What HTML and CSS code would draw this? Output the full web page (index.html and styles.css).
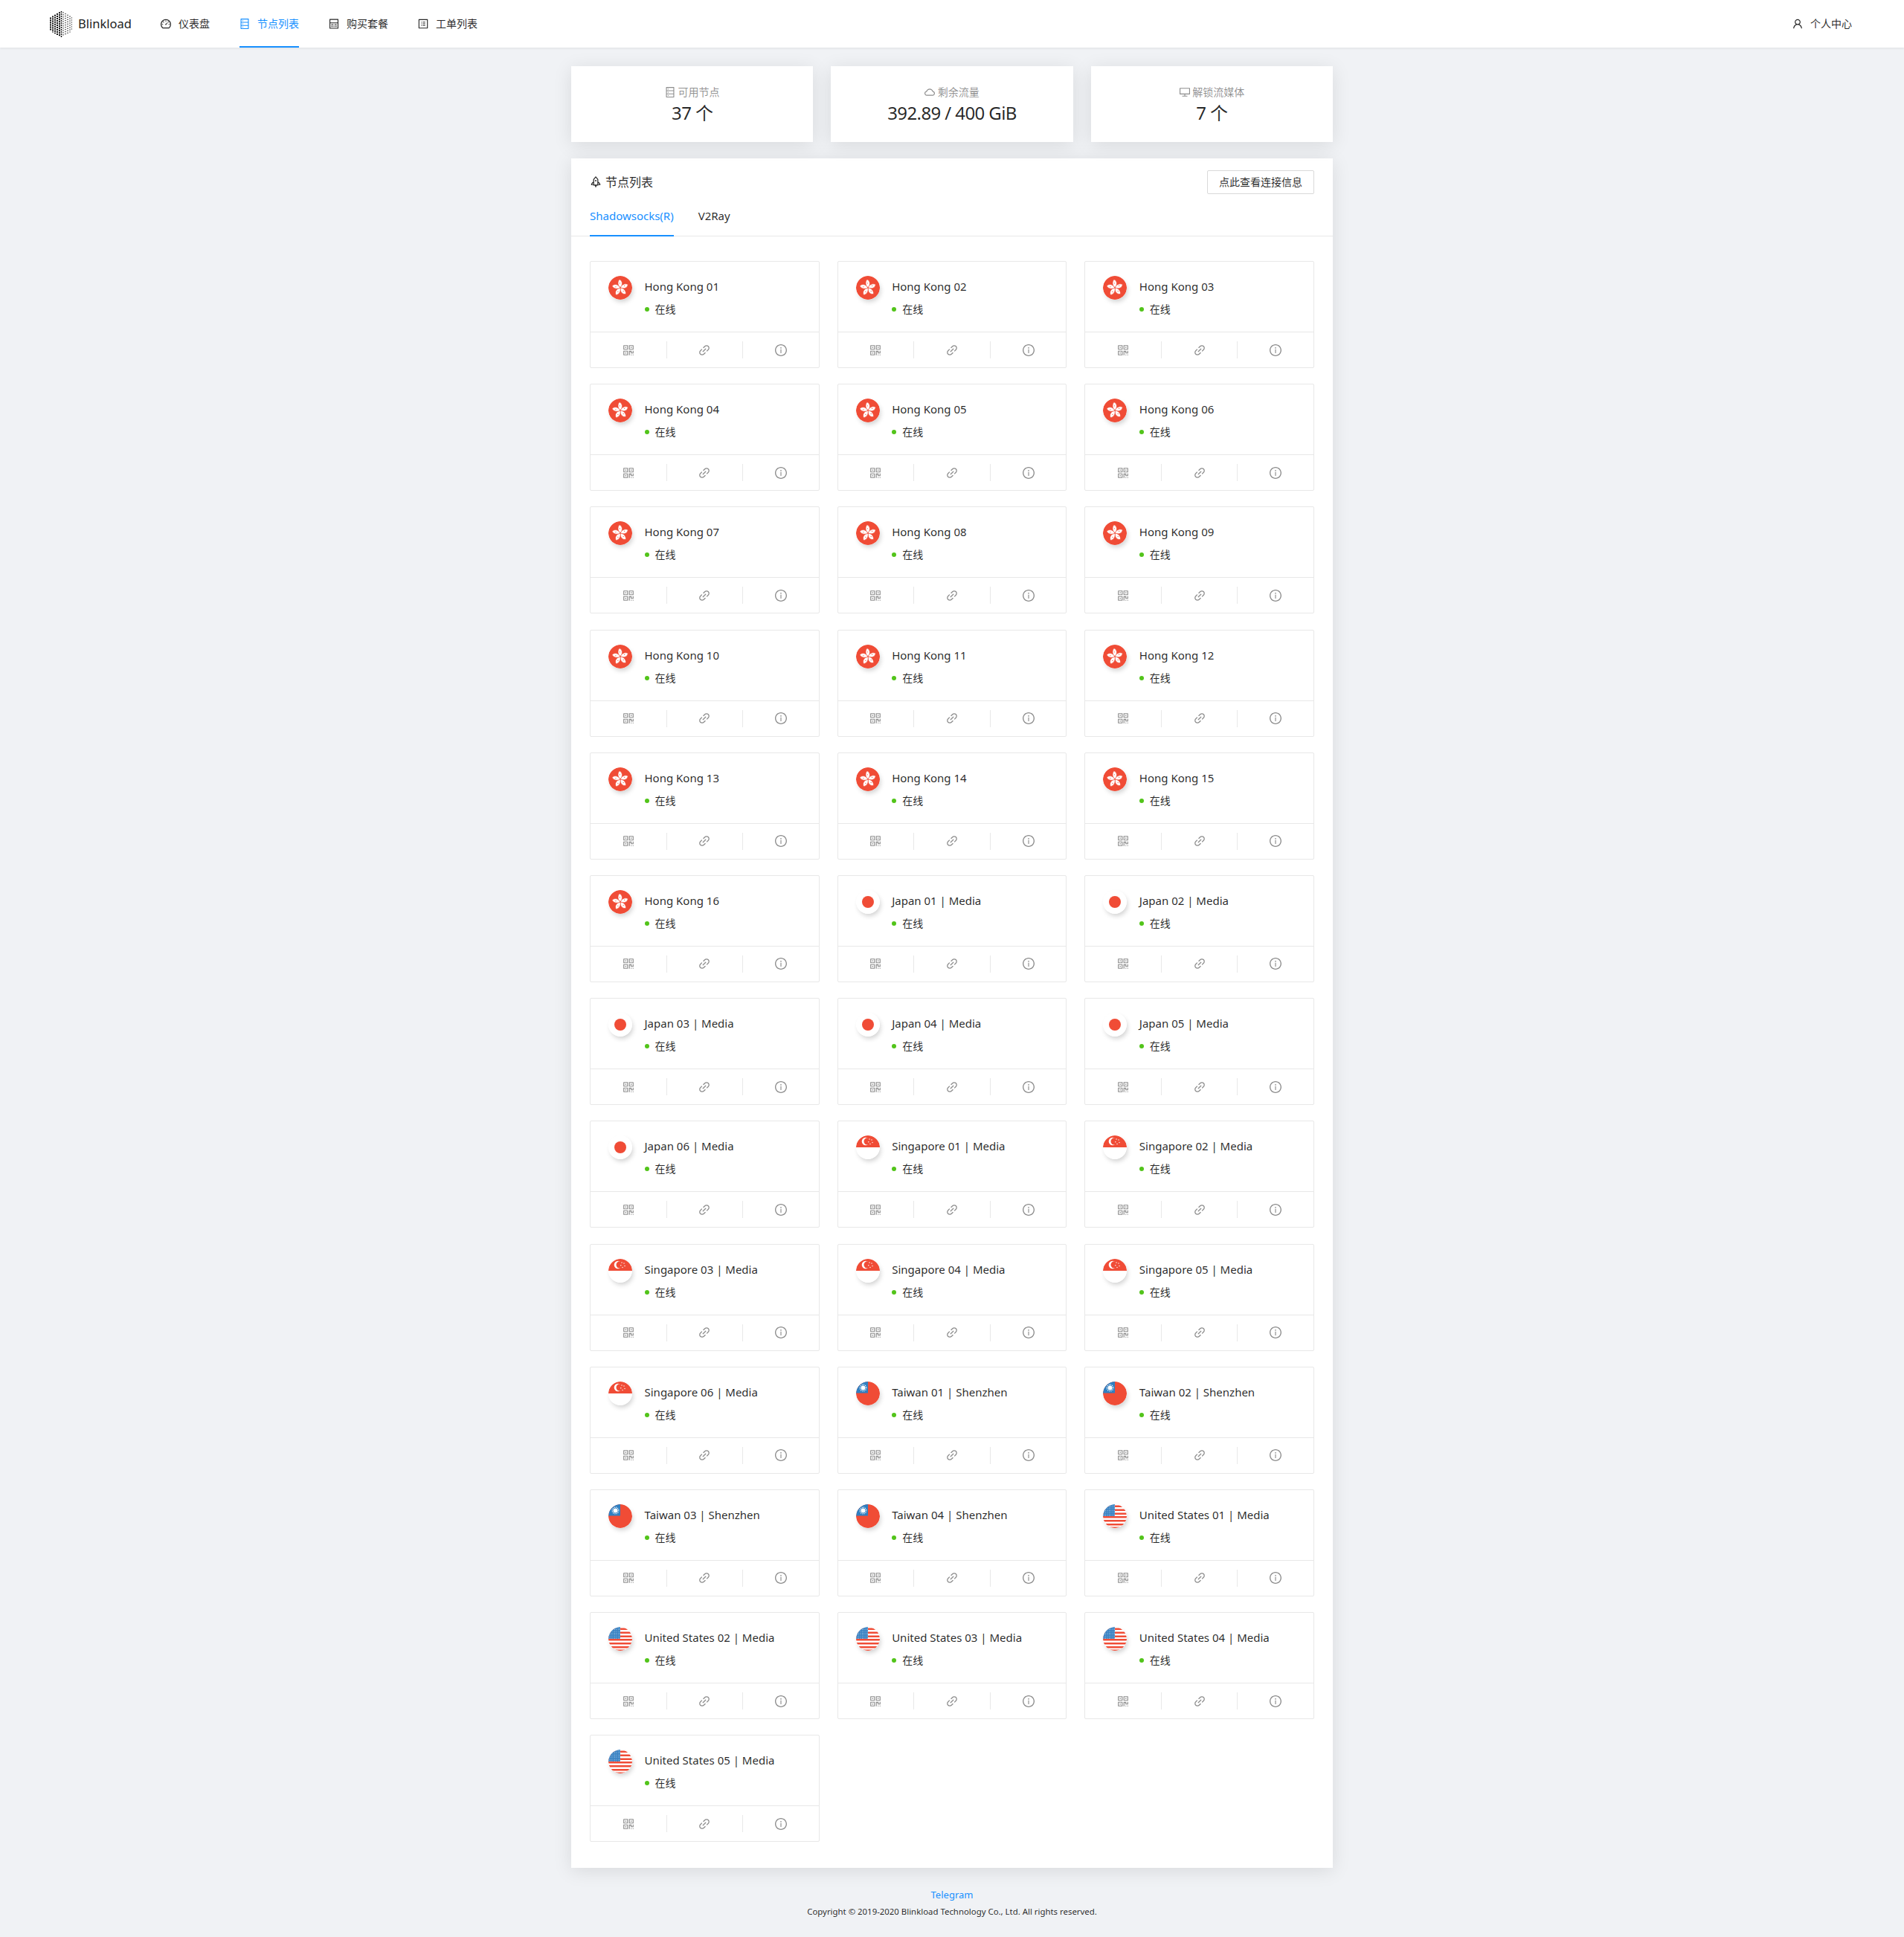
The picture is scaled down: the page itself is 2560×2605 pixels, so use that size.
FILE: index.html
```html
<!DOCTYPE html>
<html lang="zh-CN">
<head>
  <meta charset="UTF-8" />
  <title>Blinkload</title>
  <link rel="stylesheet" href="styles.css">
</head>
<body>
  <svg class="icon-defs" aria-hidden="true">
    <defs>
      <clipPath id="round"><circle cx="16" cy="16" r="16"/></clipPath>
      <pattern id="stars" width="2.4" height="2.4" patternUnits="userSpaceOnUse"><circle cx="1.2" cy="1.2" r=".42" fill="#fff"/></pattern>
    </defs>
    <symbol id="i-dashboard" viewBox="64 64 896 896"><path d="M924.8 385.6a446.7 446.7 0 0 0-96-142.4 446.7 446.7 0 0 0-142.4-96C631.1 123.8 572.5 112 512 112s-119.1 11.8-174.4 35.2a446.7 446.7 0 0 0-142.4 96 446.7 446.7 0 0 0-96 142.4C75.8 440.9 64 499.5 64 560c0 132.7 58.3 257.7 159.9 343.1l1.7 1.4c5.8 4.8 13.1 7.5 20.6 7.5h531.7c7.5 0 14.8-2.7 20.6-7.5l1.7-1.4C901.7 817.7 960 692.7 960 560c0-60.5-11.9-119.1-35.2-174.4zM761.4 836H262.6A371.12 371.12 0 0 1 140 560c0-99.4 38.7-192.8 109-263 70.3-70.3 163.7-109 263-109 99.4 0 192.8 38.7 263 109 70.3 70.3 109 163.7 109 263 0 105.6-44.5 205.5-122.6 276z"/><path d="M623.5 421.5a8.03 8.03 0 0 0-11.3 0L527.7 506c-18.7-5-39.4-.2-54.1 14.5a55.95 55.95 0 0 0 0 79.2 55.95 55.95 0 0 0 79.2 0 55.87 55.87 0 0 0 14.5-54.1l84.5-84.5c3.1-3.1 3.1-8.2 0-11.3l-28.3-28.3zM490 320h44c4.4 0 8-3.6 8-8v-80c0-4.4-3.6-8-8-8h-44c-4.4 0-8 3.6-8 8v80c0 4.4 3.6 8 8 8zm260 218v44c0 4.4 3.6 8 8 8h80c4.4 0 8-3.6 8-8v-44c0-4.4-3.6-8-8-8h-80c-4.4 0-8 3.6-8 8zm12.7-197.2l-31.1-31.1a8.03 8.03 0 0 0-11.3 0l-56.6 56.6a8.03 8.03 0 0 0 0 11.3l31.1 31.1c3.1 3.1 8.2 3.1 11.3 0l56.6-56.6c3.1-3.1 3.1-8.2 0-11.3zm-458.6-31.1a8.03 8.03 0 0 0-11.3 0l-31.1 31.1a8.03 8.03 0 0 0 0 11.3l56.6 56.6c3.1 3.1 8.2 3.1 11.3 0l31.1-31.1c3.1-3.1 3.1-8.2 0-11.3l-56.6-56.6zM262 530h-80c-4.4 0-8 3.6-8 8v44c0 4.4 3.6 8 8 8h80c4.4 0 8-3.6 8-8v-44c0-4.4-3.6-8-8-8z"/></symbol>
    <symbol id="i-database" viewBox="64 64 896 896"><path d="M832 64H192c-17.7 0-32 14.3-32 32v832c0 17.7 14.3 32 32 32h640c17.7 0 32-14.3 32-32V96c0-17.7-14.3-32-32-32zm-600 72h560v208H232V136zm560 480H232V408h560v208zm0 272H232V680h560v208zM304 240a40 40 0 1 0 80 0 40 40 0 1 0-80 0zm0 272a40 40 0 1 0 80 0 40 40 0 1 0-80 0zm0 272a40 40 0 1 0 80 0 40 40 0 1 0-80 0z"/></symbol>
    <symbol id="i-shop" viewBox="64 64 896 896"><path fill-rule="evenodd" d="M160 96h704a32 32 0 0 1 32 32v768a32 32 0 0 1-32 32H160a32 32 0 0 1-32-32V128a32 32 0 0 1 32-32zm40 72v232h624V168zm0 296v392h624V464zm80 80h190v64H280zm280 0h184v64H560zM280 664h64v112h-64zm124 0h66v112h-66zm156 0h64v112h-64zm120 0h64v112h-64z"/></symbol>
    <symbol id="i-profile" viewBox="64 64 896 896"><path d="M880 112H144c-17.7 0-32 14.3-32 32v736c0 17.7 14.3 32 32 32h736c17.7 0 32-14.3 32-32V144c0-17.7-14.3-32-32-32zm-40 728H184V184h656v656zM492 400h184c4.4 0 8-3.6 8-8v-48c0-4.4-3.6-8-8-8H492c-4.4 0-8 3.6-8 8v48c0 4.4 3.6 8 8 8zm0 144h184c4.4 0 8-3.6 8-8v-48c0-4.4-3.6-8-8-8H492c-4.4 0-8 3.6-8 8v48c0 4.4 3.6 8 8 8zm0 144h184c4.4 0 8-3.6 8-8v-48c0-4.4-3.6-8-8-8H492c-4.4 0-8 3.6-8 8v48c0 4.4 3.6 8 8 8zM340 368a40 40 0 1 0 80 0 40 40 0 1 0-80 0zm0 144a40 40 0 1 0 80 0 40 40 0 1 0-80 0zm0 144a40 40 0 1 0 80 0 40 40 0 1 0-80 0z"/></symbol>
    <symbol id="i-user" viewBox="64 64 896 896"><path d="M858.5 763.6a374 374 0 0 0-80.6-119.5 375.63 375.63 0 0 0-119.5-80.6c-.4-.2-.8-.3-1.2-.5C719.5 518 760 444.7 760 362c0-137-111-248-248-248S264 225 264 362c0 82.7 40.5 156 102.8 201.1-.4.2-.8.3-1.2.5-44.8 18.9-85 46-119.5 80.6a375.63 375.63 0 0 0-80.6 119.5A371.7 371.7 0 0 0 136 901.8a8 8 0 0 0 8 8.2h60c4.4 0 7.9-3.5 8-7.8 2-77.2 33-149.5 87.8-204.3 56.7-56.7 132-87.9 212.2-87.9s155.5 31.2 212.2 87.9C779 752.7 810 825 812 902.2c.1 4.4 3.6 7.8 8 7.8h60a8 8 0 0 0 8-8.2c-1-47.8-10.9-94.3-29.5-138.2zM512 534c-45.9 0-89.1-17.9-121.6-50.4S340 407.9 340 362c0-45.9 17.9-89.1 50.4-121.6S466.1 190 512 190s89.1 17.9 121.6 50.4S684 316.1 684 362c0 45.9-17.9 89.1-50.4 121.6S557.9 534 512 534z"/></symbol>
    <symbol id="i-cloud" viewBox="64 64 896 896"><path d="M811.4 418.7C765.6 297.9 648.9 212 512.2 212S258.8 297.8 213 418.6C127.3 441.1 64 519.1 64 612c0 110.5 89.5 200 199.9 200h496.2C870.5 812 960 722.5 960 612c0-92.7-63.1-170.7-148.6-193.3zm36.3 281a123.07 123.07 0 0 1-87.6 36.3H263.9c-33.1 0-64.2-12.9-87.6-36.3A123.3 123.3 0 0 1 140 612c0-28 9.1-54.3 26.2-76.3a125.7 125.7 0 0 1 66.1-43.7l37.9-9.9 13.9-36.6c8.6-22.8 20.6-44.1 35.7-63.4a245.6 245.6 0 0 1 52.4-49.9c41.1-28.9 89.5-44.2 140-44.2s98.9 15.3 140 44.2c19.9 14 37.5 30.8 52.4 49.9 15.1 19.3 27.1 40.7 35.7 63.4l13.8 36.5 37.8 10c54.3 14.5 92.1 63.8 92.1 120 0 33.1-12.9 64.3-36.3 87.7z"/></symbol>
    <symbol id="i-desktop" viewBox="64 64 896 896"><path d="M928 140H96c-17.7 0-32 14.3-32 32v496c0 17.7 14.3 32 32 32h380v112H304c-8.8 0-16 7.2-16 16v48c0 4.4 3.6 8 8 8h432c4.4 0 8-3.6 8-8v-48c0-8.8-7.2-16-16-16H548V700h380c17.7 0 32-14.3 32-32V172c0-17.7-14.3-32-32-32zm-40 488H136V212h752v416z"/></symbol>
    <symbol id="i-rocket" viewBox="64 64 896 896"><path fill-rule="evenodd" d="M512 84c9 0 18 4 24.5 11.4l152.4 180.700c9.8 11.500 15.100 26.100 15.100 41.200v165.800c94.600 44.900 160 141.300 160 252.900H704v32H592c-8 30-30 52-48 62v66c0 10-8 12-14 6l-18-16-18 16c-6 6-14 4-14-6v-66c-18-10-40-32-48-62H320v-32H160c0-111.600 65.400-208 160-252.900V317.300c0-15.100 5.300-29.700 15.100-41.200L487.500 95.400C493.900 87.800 503 84 512 84zm0 84L392 310c-2 2.500-2 5-2 8v376h244V318c0-3 0-5.500-2-8zM320 566c-45 30-76 76-86 122h86zm384 0v122h86c-10-46-41-92-86-122zM512 344a56 56 0 1 1 0 112 56 56 0 0 1 0-112z"/></symbol>
    <symbol id="i-qrcode" viewBox="64 64 896 896"><path d="M468 128H160c-17.7 0-32 14.3-32 32v308c0 4.4 3.6 8 8 8h332c4.4 0 8-3.6 8-8V136c0-4.4-3.6-8-8-8zm-56 284H192V192h220v220zm-138-74h56c4.4 0 8-3.6 8-8v-56c0-4.4-3.6-8-8-8h-56c-4.4 0-8 3.6-8 8v56c0 4.4 3.6 8 8 8zm194 210H136c-4.4 0-8 3.6-8 8v308c0 17.7 14.3 32 32 32h308c4.4 0 8-3.6 8-8V556c0-4.4-3.6-8-8-8zm-56 284H192V612h220v220zm-138-74h56c4.4 0 8-3.6 8-8v-56c0-4.4-3.6-8-8-8h-56c-4.4 0-8 3.6-8 8v56c0 4.4 3.6 8 8 8zm590-630H556c-4.4 0-8 3.6-8 8v332c0 4.4 3.6 8 8 8h332c4.4 0 8-3.6 8-8V160c0-17.7-14.3-32-32-32zm-32 284H612V192h220v220zm-138-74h56c4.4 0 8-3.6 8-8v-56c0-4.4-3.6-8-8-8h-56c-4.4 0-8 3.6-8 8v56c0 4.4 3.6 8 8 8zm194 210h-48c-4.4 0-8 3.6-8 8v134h-78V556c0-4.4-3.6-8-8-8H556c-4.4 0-8 3.6-8 8v332c0 4.4 3.6 8 8 8h48c4.4 0 8-3.6 8-8V644h78v102c0 4.4 3.6 8 8 8h190c4.4 0 8-3.6 8-8V556c0-4.4-3.6-8-8-8zM746 832h-48c-4.4 0-8 3.6-8 8v48c0 4.4 3.6 8 8 8h48c4.4 0 8-3.6 8-8v-48c0-4.4-3.6-8-8-8zm142 0h-48c-4.4 0-8 3.6-8 8v48c0 4.4 3.6 8 8 8h48c4.4 0 8-3.6 8-8v-48c0-4.4-3.6-8-8-8z"/></symbol>
    <symbol id="i-link" viewBox="64 64 896 896"><path d="M574 665.4a8.03 8.03 0 0 0-11.3 0L446.5 781.6c-53.8 53.8-144.6 59.5-204 0-59.5-59.5-53.8-150.2 0-204l116.2-116.2c3.1-3.1 3.1-8.2 0-11.3l-39.8-39.8a8.03 8.03 0 0 0-11.3 0L191.4 526.5c-84.6 84.6-84.6 221.5 0 306s221.5 84.6 306 0l116.2-116.2c3.1-3.1 3.1-8.2 0-11.3L574 665.4zm258.6-474c-84.6-84.6-221.5-84.6-306 0L410.3 307.6a8.03 8.03 0 0 0 0 11.3l39.7 39.7c3.1 3.1 8.2 3.1 11.3 0l116.2-116.2c53.8-53.8 144.6-59.5 204 0 59.5 59.5 53.8 150.2 0 204L665.3 562.6a8.03 8.03 0 0 0 0 11.3l39.8 39.8c3.1 3.1 8.2 3.1 11.3 0l116.2-116.2c84.5-84.6 84.5-221.5 0-306.1zM610.1 372.3a8.03 8.03 0 0 0-11.3 0L372.3 598.7a8.03 8.03 0 0 0 0 11.3l39.6 39.6c3.1 3.1 8.2 3.1 11.3 0l226.4-226.4c3.1-3.1 3.1-8.2 0-11.3l-39.5-39.6z"/></symbol>
    <symbol id="i-info" viewBox="64 64 896 896"><path d="M512 64C264.6 64 64 264.6 64 512s200.6 448 448 448 448-200.6 448-448S759.4 64 512 64zm0 820c-205.4 0-372-166.6-372-372s166.6-372 372-372 372 166.6 372 372-166.6 372-372 372z"/><path d="M464 336a48 48 0 1 0 96 0 48 48 0 1 0-96 0zm72 112h-48c-4.4 0-8 3.6-8 8v272c0 4.4 3.6 8 8 8h48c4.4 0 8-3.6 8-8V456c0-4.4-3.6-8-8-8z"/></symbol>

    <symbol id="flag-hk" viewBox="0 0 32 32">
      <circle cx="16" cy="16" r="16" fill="#f04c36"/>
      <g id="hk-petal"><path d="M16 15.800C13 13.500 11.600 8.800 14.800 4.800c3.900 1.500 5.200 6.800 1.200 11z" fill="#fff" stroke="#f04c36" stroke-width=".6"/><circle cx="15.300" cy="9.800" r=".6" fill="#f04c36"/></g>
      <use href="#hk-petal" transform="rotate(72 16 16)"/>
      <use href="#hk-petal" transform="rotate(144 16 16)"/>
      <use href="#hk-petal" transform="rotate(216 16 16)"/>
      <use href="#hk-petal" transform="rotate(288 16 16)"/>
    </symbol>
    <symbol id="flag-jp" viewBox="0 0 32 32">
      <circle cx="16" cy="16" r="16" fill="#fff"/>
      <circle cx="16" cy="16" r="8" fill="#f04c36"/>
    </symbol>
    <symbol id="flag-sg" viewBox="0 0 32 32">
      <circle cx="16" cy="16" r="16" fill="#fff"/>
      <path d="M0 16a16 16 0 0 1 32 0z" fill="#f04c36"/>
      <circle cx="13" cy="8" r="5.300" fill="#fff"/>
      <circle cx="15.200" cy="8" r="4.700" fill="#f04c36"/>
      <g fill="#fff"><circle cx="18" cy="5" r=".7"/><circle cx="21" cy="6" r=".7"/><circle cx="22" cy="9.500" r=".7"/><circle cx="19" cy="11.500" r=".7"/><circle cx="16.800" cy="8.800" r=".7"/></g>
    </symbol>
    <symbol id="flag-tw" viewBox="0 0 32 32">
      <circle cx="16" cy="16" r="16" fill="#f04c36"/>
      <g clip-path="url(#round)"><rect width="16" height="15.500" fill="#2f7fc1"/></g>
      <circle cx="9.500" cy="8.500" r="3" fill="#fff"/>
      <circle cx="9.500" cy="8.500" r="4.300" fill="none" stroke="#fff" stroke-width="1.400" stroke-dasharray="1 1.250"/>
    </symbol>
    <symbol id="flag-us" viewBox="0 0 32 32">
      <g clip-path="url(#round)">
        <rect width="32" height="32" fill="#fff"/>
        <g fill="#f04c36"><rect y="1.500" width="32" height="2.500"/><rect y="6.500" width="32" height="2.500"/><rect y="11.500" width="32" height="2.500"/><rect y="16" width="32" height="2.500"/><rect y="21" width="32" height="2.500"/><rect y="26" width="32" height="2.500"/><rect y="30.500" width="32" height="2"/></g>
        <rect width="16" height="16" fill="#3a83c3"/>
        <rect width="16" height="16" fill="url(#stars)"/>
      </g>
    </symbol>
  </svg>

  <header class="topbar">
    <a class="logo" href="#">
      <svg class="logo-mark" viewBox="0 0 30 35" fill="none" stroke="#111" stroke-width="2" stroke-dasharray="2 1">
        <path d="M1 8.400V26.600"/><path d="M4 6.600V28.400"/><path d="M7 4.800V30.200"/><path d="M10 3V32"/><path d="M13 1.200V33.800"/><path d="M15.500 0V35" stroke-width="1.400"/>
        <path d="M18 1.200V33.800" stroke-width="1.200" stroke-dasharray="1.200 1.800"/><path d="M21 3V32" stroke-width="1.200" stroke-dasharray="1.200 1.800"/><path d="M24 4.800V30.200" stroke-width="1.200" stroke-dasharray="1.200 1.800"/><path d="M27 6.600V28.400" stroke-width="1.200" stroke-dasharray="1.200 1.800"/><path d="M29.500 8.400V26.600" stroke-width="1.200" stroke-dasharray="1.200 1.800"/>
      </svg>
      <span>Blinkload</span>
    </a>
    <nav class="nav">
      <a href="#"><svg class="icon"><use href="#i-dashboard"/></svg>仪表盘</a>
      <a href="#" class="active"><svg class="icon"><use href="#i-database"/></svg>节点列表</a>
      <a href="#"><svg class="icon"><use href="#i-shop"/></svg>购买套餐</a>
      <a href="#"><svg class="icon"><use href="#i-profile"/></svg>工单列表</a>
    </nav>
    <a class="user-link" href="#"><svg class="icon"><use href="#i-user"/></svg>个人中心</a>
  </header>

  <main class="container">
    <div class="stats">
      <div class="stat-card">
        <div class="stat-label"><svg class="icon"><use href="#i-database"/></svg> 可用节点</div>
        <div class="stat-value">37 个</div>
      </div>
      <div class="stat-card">
        <div class="stat-label"><svg class="icon"><use href="#i-cloud"/></svg> 剩余流量</div>
        <div class="stat-value">392.89 / 400 GiB</div>
      </div>
      <div class="stat-card">
        <div class="stat-label"><svg class="icon"><use href="#i-desktop"/></svg> 解锁流媒体</div>
        <div class="stat-value">7 个</div>
      </div>
    </div>

    <section class="panel">
      <div class="panel-head">
        <h2 class="panel-title"><svg class="icon"><use href="#i-rocket"/></svg>节点列表</h2>
        <button class="btn" type="button">点此查看连接信息</button>
      </div>
      <div class="tabs">
        <a href="#" class="tab active">Shadowsocks(R)</a>
        <a href="#" class="tab">V2Ray</a>
      </div>
      <div class="node-grid">
        <div class="node-card">
          <div class="node-info"><svg class="flag"><use href="#flag-hk"/></svg><div class="node-text"><h4>Hong Kong 01</h4><p class="status"><i></i>在线</p></div></div>
          <div class="node-actions"><span><svg class="icon"><use href="#i-qrcode"/></svg></span><span><svg class="icon"><use href="#i-link"/></svg></span><span><svg class="icon"><use href="#i-info"/></svg></span></div>
        </div>
        <div class="node-card">
          <div class="node-info"><svg class="flag"><use href="#flag-hk"/></svg><div class="node-text"><h4>Hong Kong 02</h4><p class="status"><i></i>在线</p></div></div>
          <div class="node-actions"><span><svg class="icon"><use href="#i-qrcode"/></svg></span><span><svg class="icon"><use href="#i-link"/></svg></span><span><svg class="icon"><use href="#i-info"/></svg></span></div>
        </div>
        <div class="node-card">
          <div class="node-info"><svg class="flag"><use href="#flag-hk"/></svg><div class="node-text"><h4>Hong Kong 03</h4><p class="status"><i></i>在线</p></div></div>
          <div class="node-actions"><span><svg class="icon"><use href="#i-qrcode"/></svg></span><span><svg class="icon"><use href="#i-link"/></svg></span><span><svg class="icon"><use href="#i-info"/></svg></span></div>
        </div>
        <div class="node-card">
          <div class="node-info"><svg class="flag"><use href="#flag-hk"/></svg><div class="node-text"><h4>Hong Kong 04</h4><p class="status"><i></i>在线</p></div></div>
          <div class="node-actions"><span><svg class="icon"><use href="#i-qrcode"/></svg></span><span><svg class="icon"><use href="#i-link"/></svg></span><span><svg class="icon"><use href="#i-info"/></svg></span></div>
        </div>
        <div class="node-card">
          <div class="node-info"><svg class="flag"><use href="#flag-hk"/></svg><div class="node-text"><h4>Hong Kong 05</h4><p class="status"><i></i>在线</p></div></div>
          <div class="node-actions"><span><svg class="icon"><use href="#i-qrcode"/></svg></span><span><svg class="icon"><use href="#i-link"/></svg></span><span><svg class="icon"><use href="#i-info"/></svg></span></div>
        </div>
        <div class="node-card">
          <div class="node-info"><svg class="flag"><use href="#flag-hk"/></svg><div class="node-text"><h4>Hong Kong 06</h4><p class="status"><i></i>在线</p></div></div>
          <div class="node-actions"><span><svg class="icon"><use href="#i-qrcode"/></svg></span><span><svg class="icon"><use href="#i-link"/></svg></span><span><svg class="icon"><use href="#i-info"/></svg></span></div>
        </div>
        <div class="node-card">
          <div class="node-info"><svg class="flag"><use href="#flag-hk"/></svg><div class="node-text"><h4>Hong Kong 07</h4><p class="status"><i></i>在线</p></div></div>
          <div class="node-actions"><span><svg class="icon"><use href="#i-qrcode"/></svg></span><span><svg class="icon"><use href="#i-link"/></svg></span><span><svg class="icon"><use href="#i-info"/></svg></span></div>
        </div>
        <div class="node-card">
          <div class="node-info"><svg class="flag"><use href="#flag-hk"/></svg><div class="node-text"><h4>Hong Kong 08</h4><p class="status"><i></i>在线</p></div></div>
          <div class="node-actions"><span><svg class="icon"><use href="#i-qrcode"/></svg></span><span><svg class="icon"><use href="#i-link"/></svg></span><span><svg class="icon"><use href="#i-info"/></svg></span></div>
        </div>
        <div class="node-card">
          <div class="node-info"><svg class="flag"><use href="#flag-hk"/></svg><div class="node-text"><h4>Hong Kong 09</h4><p class="status"><i></i>在线</p></div></div>
          <div class="node-actions"><span><svg class="icon"><use href="#i-qrcode"/></svg></span><span><svg class="icon"><use href="#i-link"/></svg></span><span><svg class="icon"><use href="#i-info"/></svg></span></div>
        </div>
        <div class="node-card">
          <div class="node-info"><svg class="flag"><use href="#flag-hk"/></svg><div class="node-text"><h4>Hong Kong 10</h4><p class="status"><i></i>在线</p></div></div>
          <div class="node-actions"><span><svg class="icon"><use href="#i-qrcode"/></svg></span><span><svg class="icon"><use href="#i-link"/></svg></span><span><svg class="icon"><use href="#i-info"/></svg></span></div>
        </div>
        <div class="node-card">
          <div class="node-info"><svg class="flag"><use href="#flag-hk"/></svg><div class="node-text"><h4>Hong Kong 11</h4><p class="status"><i></i>在线</p></div></div>
          <div class="node-actions"><span><svg class="icon"><use href="#i-qrcode"/></svg></span><span><svg class="icon"><use href="#i-link"/></svg></span><span><svg class="icon"><use href="#i-info"/></svg></span></div>
        </div>
        <div class="node-card">
          <div class="node-info"><svg class="flag"><use href="#flag-hk"/></svg><div class="node-text"><h4>Hong Kong 12</h4><p class="status"><i></i>在线</p></div></div>
          <div class="node-actions"><span><svg class="icon"><use href="#i-qrcode"/></svg></span><span><svg class="icon"><use href="#i-link"/></svg></span><span><svg class="icon"><use href="#i-info"/></svg></span></div>
        </div>
        <div class="node-card">
          <div class="node-info"><svg class="flag"><use href="#flag-hk"/></svg><div class="node-text"><h4>Hong Kong 13</h4><p class="status"><i></i>在线</p></div></div>
          <div class="node-actions"><span><svg class="icon"><use href="#i-qrcode"/></svg></span><span><svg class="icon"><use href="#i-link"/></svg></span><span><svg class="icon"><use href="#i-info"/></svg></span></div>
        </div>
        <div class="node-card">
          <div class="node-info"><svg class="flag"><use href="#flag-hk"/></svg><div class="node-text"><h4>Hong Kong 14</h4><p class="status"><i></i>在线</p></div></div>
          <div class="node-actions"><span><svg class="icon"><use href="#i-qrcode"/></svg></span><span><svg class="icon"><use href="#i-link"/></svg></span><span><svg class="icon"><use href="#i-info"/></svg></span></div>
        </div>
        <div class="node-card">
          <div class="node-info"><svg class="flag"><use href="#flag-hk"/></svg><div class="node-text"><h4>Hong Kong 15</h4><p class="status"><i></i>在线</p></div></div>
          <div class="node-actions"><span><svg class="icon"><use href="#i-qrcode"/></svg></span><span><svg class="icon"><use href="#i-link"/></svg></span><span><svg class="icon"><use href="#i-info"/></svg></span></div>
        </div>
        <div class="node-card">
          <div class="node-info"><svg class="flag"><use href="#flag-hk"/></svg><div class="node-text"><h4>Hong Kong 16</h4><p class="status"><i></i>在线</p></div></div>
          <div class="node-actions"><span><svg class="icon"><use href="#i-qrcode"/></svg></span><span><svg class="icon"><use href="#i-link"/></svg></span><span><svg class="icon"><use href="#i-info"/></svg></span></div>
        </div>
        <div class="node-card">
          <div class="node-info"><svg class="flag"><use href="#flag-jp"/></svg><div class="node-text"><h4>Japan 01 | Media</h4><p class="status"><i></i>在线</p></div></div>
          <div class="node-actions"><span><svg class="icon"><use href="#i-qrcode"/></svg></span><span><svg class="icon"><use href="#i-link"/></svg></span><span><svg class="icon"><use href="#i-info"/></svg></span></div>
        </div>
        <div class="node-card">
          <div class="node-info"><svg class="flag"><use href="#flag-jp"/></svg><div class="node-text"><h4>Japan 02 | Media</h4><p class="status"><i></i>在线</p></div></div>
          <div class="node-actions"><span><svg class="icon"><use href="#i-qrcode"/></svg></span><span><svg class="icon"><use href="#i-link"/></svg></span><span><svg class="icon"><use href="#i-info"/></svg></span></div>
        </div>
        <div class="node-card">
          <div class="node-info"><svg class="flag"><use href="#flag-jp"/></svg><div class="node-text"><h4>Japan 03 | Media</h4><p class="status"><i></i>在线</p></div></div>
          <div class="node-actions"><span><svg class="icon"><use href="#i-qrcode"/></svg></span><span><svg class="icon"><use href="#i-link"/></svg></span><span><svg class="icon"><use href="#i-info"/></svg></span></div>
        </div>
        <div class="node-card">
          <div class="node-info"><svg class="flag"><use href="#flag-jp"/></svg><div class="node-text"><h4>Japan 04 | Media</h4><p class="status"><i></i>在线</p></div></div>
          <div class="node-actions"><span><svg class="icon"><use href="#i-qrcode"/></svg></span><span><svg class="icon"><use href="#i-link"/></svg></span><span><svg class="icon"><use href="#i-info"/></svg></span></div>
        </div>
        <div class="node-card">
          <div class="node-info"><svg class="flag"><use href="#flag-jp"/></svg><div class="node-text"><h4>Japan 05 | Media</h4><p class="status"><i></i>在线</p></div></div>
          <div class="node-actions"><span><svg class="icon"><use href="#i-qrcode"/></svg></span><span><svg class="icon"><use href="#i-link"/></svg></span><span><svg class="icon"><use href="#i-info"/></svg></span></div>
        </div>
        <div class="node-card">
          <div class="node-info"><svg class="flag"><use href="#flag-jp"/></svg><div class="node-text"><h4>Japan 06 | Media</h4><p class="status"><i></i>在线</p></div></div>
          <div class="node-actions"><span><svg class="icon"><use href="#i-qrcode"/></svg></span><span><svg class="icon"><use href="#i-link"/></svg></span><span><svg class="icon"><use href="#i-info"/></svg></span></div>
        </div>
        <div class="node-card">
          <div class="node-info"><svg class="flag"><use href="#flag-sg"/></svg><div class="node-text"><h4>Singapore 01 | Media</h4><p class="status"><i></i>在线</p></div></div>
          <div class="node-actions"><span><svg class="icon"><use href="#i-qrcode"/></svg></span><span><svg class="icon"><use href="#i-link"/></svg></span><span><svg class="icon"><use href="#i-info"/></svg></span></div>
        </div>
        <div class="node-card">
          <div class="node-info"><svg class="flag"><use href="#flag-sg"/></svg><div class="node-text"><h4>Singapore 02 | Media</h4><p class="status"><i></i>在线</p></div></div>
          <div class="node-actions"><span><svg class="icon"><use href="#i-qrcode"/></svg></span><span><svg class="icon"><use href="#i-link"/></svg></span><span><svg class="icon"><use href="#i-info"/></svg></span></div>
        </div>
        <div class="node-card">
          <div class="node-info"><svg class="flag"><use href="#flag-sg"/></svg><div class="node-text"><h4>Singapore 03 | Media</h4><p class="status"><i></i>在线</p></div></div>
          <div class="node-actions"><span><svg class="icon"><use href="#i-qrcode"/></svg></span><span><svg class="icon"><use href="#i-link"/></svg></span><span><svg class="icon"><use href="#i-info"/></svg></span></div>
        </div>
        <div class="node-card">
          <div class="node-info"><svg class="flag"><use href="#flag-sg"/></svg><div class="node-text"><h4>Singapore 04 | Media</h4><p class="status"><i></i>在线</p></div></div>
          <div class="node-actions"><span><svg class="icon"><use href="#i-qrcode"/></svg></span><span><svg class="icon"><use href="#i-link"/></svg></span><span><svg class="icon"><use href="#i-info"/></svg></span></div>
        </div>
        <div class="node-card">
          <div class="node-info"><svg class="flag"><use href="#flag-sg"/></svg><div class="node-text"><h4>Singapore 05 | Media</h4><p class="status"><i></i>在线</p></div></div>
          <div class="node-actions"><span><svg class="icon"><use href="#i-qrcode"/></svg></span><span><svg class="icon"><use href="#i-link"/></svg></span><span><svg class="icon"><use href="#i-info"/></svg></span></div>
        </div>
        <div class="node-card">
          <div class="node-info"><svg class="flag"><use href="#flag-sg"/></svg><div class="node-text"><h4>Singapore 06 | Media</h4><p class="status"><i></i>在线</p></div></div>
          <div class="node-actions"><span><svg class="icon"><use href="#i-qrcode"/></svg></span><span><svg class="icon"><use href="#i-link"/></svg></span><span><svg class="icon"><use href="#i-info"/></svg></span></div>
        </div>
        <div class="node-card">
          <div class="node-info"><svg class="flag"><use href="#flag-tw"/></svg><div class="node-text"><h4>Taiwan 01 | Shenzhen</h4><p class="status"><i></i>在线</p></div></div>
          <div class="node-actions"><span><svg class="icon"><use href="#i-qrcode"/></svg></span><span><svg class="icon"><use href="#i-link"/></svg></span><span><svg class="icon"><use href="#i-info"/></svg></span></div>
        </div>
        <div class="node-card">
          <div class="node-info"><svg class="flag"><use href="#flag-tw"/></svg><div class="node-text"><h4>Taiwan 02 | Shenzhen</h4><p class="status"><i></i>在线</p></div></div>
          <div class="node-actions"><span><svg class="icon"><use href="#i-qrcode"/></svg></span><span><svg class="icon"><use href="#i-link"/></svg></span><span><svg class="icon"><use href="#i-info"/></svg></span></div>
        </div>
        <div class="node-card">
          <div class="node-info"><svg class="flag"><use href="#flag-tw"/></svg><div class="node-text"><h4>Taiwan 03 | Shenzhen</h4><p class="status"><i></i>在线</p></div></div>
          <div class="node-actions"><span><svg class="icon"><use href="#i-qrcode"/></svg></span><span><svg class="icon"><use href="#i-link"/></svg></span><span><svg class="icon"><use href="#i-info"/></svg></span></div>
        </div>
        <div class="node-card">
          <div class="node-info"><svg class="flag"><use href="#flag-tw"/></svg><div class="node-text"><h4>Taiwan 04 | Shenzhen</h4><p class="status"><i></i>在线</p></div></div>
          <div class="node-actions"><span><svg class="icon"><use href="#i-qrcode"/></svg></span><span><svg class="icon"><use href="#i-link"/></svg></span><span><svg class="icon"><use href="#i-info"/></svg></span></div>
        </div>
        <div class="node-card">
          <div class="node-info"><svg class="flag"><use href="#flag-us"/></svg><div class="node-text"><h4>United States 01 | Media</h4><p class="status"><i></i>在线</p></div></div>
          <div class="node-actions"><span><svg class="icon"><use href="#i-qrcode"/></svg></span><span><svg class="icon"><use href="#i-link"/></svg></span><span><svg class="icon"><use href="#i-info"/></svg></span></div>
        </div>
        <div class="node-card">
          <div class="node-info"><svg class="flag"><use href="#flag-us"/></svg><div class="node-text"><h4>United States 02 | Media</h4><p class="status"><i></i>在线</p></div></div>
          <div class="node-actions"><span><svg class="icon"><use href="#i-qrcode"/></svg></span><span><svg class="icon"><use href="#i-link"/></svg></span><span><svg class="icon"><use href="#i-info"/></svg></span></div>
        </div>
        <div class="node-card">
          <div class="node-info"><svg class="flag"><use href="#flag-us"/></svg><div class="node-text"><h4>United States 03 | Media</h4><p class="status"><i></i>在线</p></div></div>
          <div class="node-actions"><span><svg class="icon"><use href="#i-qrcode"/></svg></span><span><svg class="icon"><use href="#i-link"/></svg></span><span><svg class="icon"><use href="#i-info"/></svg></span></div>
        </div>
        <div class="node-card">
          <div class="node-info"><svg class="flag"><use href="#flag-us"/></svg><div class="node-text"><h4>United States 04 | Media</h4><p class="status"><i></i>在线</p></div></div>
          <div class="node-actions"><span><svg class="icon"><use href="#i-qrcode"/></svg></span><span><svg class="icon"><use href="#i-link"/></svg></span><span><svg class="icon"><use href="#i-info"/></svg></span></div>
        </div>
        <div class="node-card">
          <div class="node-info"><svg class="flag"><use href="#flag-us"/></svg><div class="node-text"><h4>United States 05 | Media</h4><p class="status"><i></i>在线</p></div></div>
          <div class="node-actions"><span><svg class="icon"><use href="#i-qrcode"/></svg></span><span><svg class="icon"><use href="#i-link"/></svg></span><span><svg class="icon"><use href="#i-info"/></svg></span></div>
        </div>
      </div>
    </section>
  </main>

  <footer class="footer">
    <a href="#">Telegram</a>
    <p>Copyright © 2019-2020 Blinkload Technology Co., Ltd. All rights reserved.</p>
  </footer>
</body>
</html>
```

FILE: styles.css
```css
* {
  margin: 0;
  padding: 0;
  box-sizing: border-box;
}

body {
  background-color: #f0f2f5;
  color: rgba(0, 0, 0, 0.85);
  font-family: "Noto Sans", "Noto Sans CJK SC", sans-serif;
  font-size: 14px;
  line-height: 22px;
}

a {
  color: inherit;
  text-decoration: none;
}

.icon {
  width: 1em;
  height: 1em;
  fill: currentColor;
  vertical-align: -2px;
}

.icon-defs {
  position: absolute;
  width: 0;
  height: 0;
}

.topbar {
  height: 64px;
  padding: 0 70px 0 67px;
  background-color: #fff;
  box-shadow: 0 1px 3px rgba(0, 0, 0, 0.08);
  display: flex;
  align-items: center;
}

.logo {
  display: flex;
  align-items: center;
  gap: 8px;
  color: #222;
  font-size: 16.5px;
}

.logo-mark {
  width: 30px;
  height: 35px;
}

.nav {
  display: flex;
  gap: 40px;
  margin-left: 39px;
  flex: 1;
}

.nav a {
  height: 64px;
  line-height: 64px;
  border-bottom: 2px solid transparent;
}

.nav a .icon,
.user-link .icon {
  margin-right: 10px;
}

.nav a.active {
  color: #1890ff;
  border-bottom-color: #1890ff;
}

.container {
  width: 1024px;
  margin: 0 auto;
  padding-top: 25px;
}

.stats {
  display: grid;
  grid-template-columns: repeat(3, 1fr);
  gap: 24px;
}

.stat-card {
  height: 102px;
  padding-top: 24px;
  background-color: #fff;
  text-align: center;
  box-shadow: 0 4px 24px rgba(0, 0, 0, 0.1);
}

.stat-label {
  color: rgba(0, 0, 0, 0.45);
}

.stat-value {
  margin-top: 1px;
  font-size: 24px;
  line-height: 32px;
  letter-spacing: -0.6px;
}

.panel {
  margin-top: 22px;
  background-color: #fff;
  box-shadow: 0 4px 24px rgba(0, 0, 0, 0.1);
}

.panel-head {
  padding: 16px 25px 0;
  display: flex;
  align-items: center;
  justify-content: space-between;
}

.panel-title {
  font-size: 16px;
  font-weight: 400;
}

.panel-title .icon {
  margin-right: 5px;
}

.btn {
  width: 144px;
  height: 32px;
  padding-bottom: 2px;
  background-color: #fff;
  border: 1px solid #d9d9d9;
  border-radius: 2px;
  color: rgba(0, 0, 0, 0.85);
  font-family: inherit;
  font-size: 14px;
}

.tabs {
  margin-top: 8px;
  padding: 0 25px;
  display: flex;
  gap: 33px;
  border-bottom: 1px solid #e8e8e8;
}

.tab {
  padding: 10px 0 15px;
  margin-bottom: -1px;
  border-bottom: 2px solid transparent;
  font-size: 15px;
}

.tab.active {
  color: #1890ff;
  border-bottom-color: #1890ff;
}

.node-grid {
  padding: 33px 25px 34.6px;
  display: grid;
  grid-template-columns: repeat(3, 1fr);
  grid-auto-rows: 144px;
  gap: 21.2px 24px;
}

.node-card {
  border: 1px solid #e8e8e8;
  border-radius: 2px;
  display: flex;
  flex-direction: column;
}

.node-info {
  height: 95px;
  padding: 19px 24px 0;
  display: flex;
  gap: 16.5px;
  border-bottom: 1px solid #e8e8e8;
}

.flag {
  width: 32px;
  height: 32px;
  flex: none;
  border-radius: 50%;
  box-shadow: 2px 4px 6px -1px rgba(0, 0, 0, 0.18);
}

.node-text {
  padding-top: 3px;
}

.node-text h4 {
  font-size: 15px;
  font-weight: 400;
}

.status {
  margin-top: 9px;
  display: flex;
  align-items: center;
}

.status i {
  width: 6px;
  height: 6px;
  margin-right: 8px;
  border-radius: 50%;
  background-color: #52c41a;
}

.node-actions {
  flex: 1;
  display: flex;
  align-items: center;
  color: rgba(0, 0, 0, 0.45);
}

.node-actions span {
  flex: 1;
  height: 23px;
  display: flex;
  align-items: center;
  justify-content: center;
  border-right: 1px solid #e8e8e8;
  font-size: 16px;
}

.node-actions span:last-child {
  border-right: none;
}

.footer {
  padding: 25px 0 23px;
  text-align: center;
  font-size: 11.4px;
}

.footer a {
  color: #1890ff;
  font-size: 13px;
}
```
